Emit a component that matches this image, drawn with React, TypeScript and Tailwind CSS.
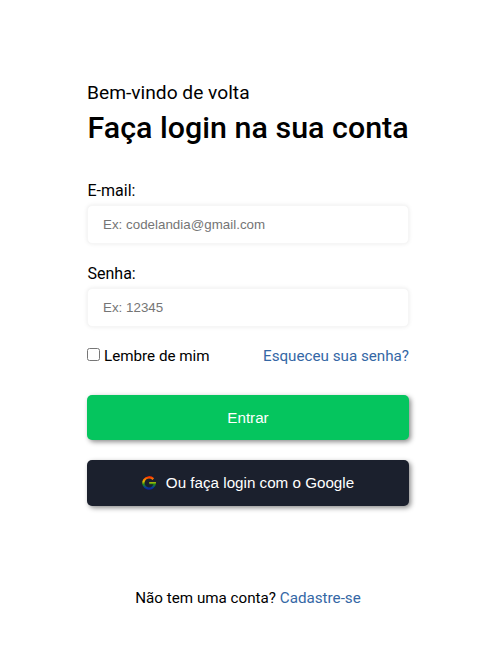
const fieldClass =
  "block h-[39px] w-full rounded-[5px] border border-[#f6f6f6] bg-white px-[15px] font-['Liberation_Sans',sans-serif] text-[13.33px] tracking-[0.02px] shadow-[0_0_4px_rgba(0,0,0,0.08)] outline-none placeholder:text-[#757575]";

function GoogleMark() {
  return (
    <svg className="mr-[10px] size-[14px]" viewBox="0 0 14 14" fill="none" aria-hidden="true">
      <defs>
        <linearGradient id="spectrum" x1="7" y1="0" x2="7" y2="14" gradientUnits="userSpaceOnUse">
          <stop offset="0" stopColor="#f01800" />
          <stop offset="0.2" stopColor="#ff7200" />
          <stop offset="0.4" stopColor="#d5c500" />
          <stop offset="0.6" stopColor="#1d8b18" />
          <stop offset="0.82" stopColor="#053b9c" />
          <stop offset="1" stopColor="#151a91" />
        </linearGradient>
      </defs>
      <path
        d="M11.3 3.1A5.7 5.7 0 1 0 12.8 7.2H7.2"
        stroke="url(#spectrum)"
        strokeWidth="2.3"
      />
    </svg>
  );
}

export default function App() {
  return (
    <main className="flex h-[647px] w-full justify-center bg-white pr-px font-['Roboto',sans-serif] text-black">
      <section className="w-[322px] pt-[81px]">
        <p className="text-[19.2px] leading-6">Bem-vindo de volta</p>
        <h1 className="mt-[3px] pl-[0.5px] text-[30.4px] leading-10 font-medium tracking-[0.02px] whitespace-nowrap">Faça login na sua conta</h1>
        <form className="mt-[33px]">
          <label htmlFor="email" className="block pl-[0.5px] text-base leading-5">E-mail:</label>
          <input id="email" className={`mt-1 ${fieldClass}`} placeholder="Ex: codelandia@gmail.com" />
          <label htmlFor="senha" className="mt-5 block pl-[0.5px] text-base leading-5">Senha:</label>
          <input id="senha" className={`mt-1 ${fieldClass}`} placeholder="Ex: 12345" />
          <div className="mt-[19px] flex justify-between text-[15.2px] leading-5">
            <label className="flex">
              <input type="checkbox" className="mt-[2px] mr-1 size-[13px]" />
              Lembre de mim
            </label>
            <a className="text-[#3467a5]">Esqueceu sua senha?</a>
          </div>
          <button type="button" className="mt-[29px] block h-[45px] w-full rounded-[5px] bg-[#05c55e] pt-px font-['Liberation_Sans',sans-serif] text-[15.2px] text-white shadow-[2px_2px_5px_rgba(0,0,0,0.45)]">
            Entrar
          </button>
          <button type="button" className="mt-5 flex h-[46px] w-full items-center justify-center rounded-[5px] bg-[#1b202d] font-['Liberation_Sans',sans-serif] text-[15.2px] text-white shadow-[2px_2px_5px_rgba(0,0,0,0.45)]">
            <GoogleMark />
            Ou faça login com o Google
          </button>
        </form>
        <p className="mt-[82px] text-center text-[15.2px] leading-5">
          Não tem uma conta? <a className="text-[#3467a5]">Cadastre-se</a>
        </p>
      </section>
    </main>
  );
}
